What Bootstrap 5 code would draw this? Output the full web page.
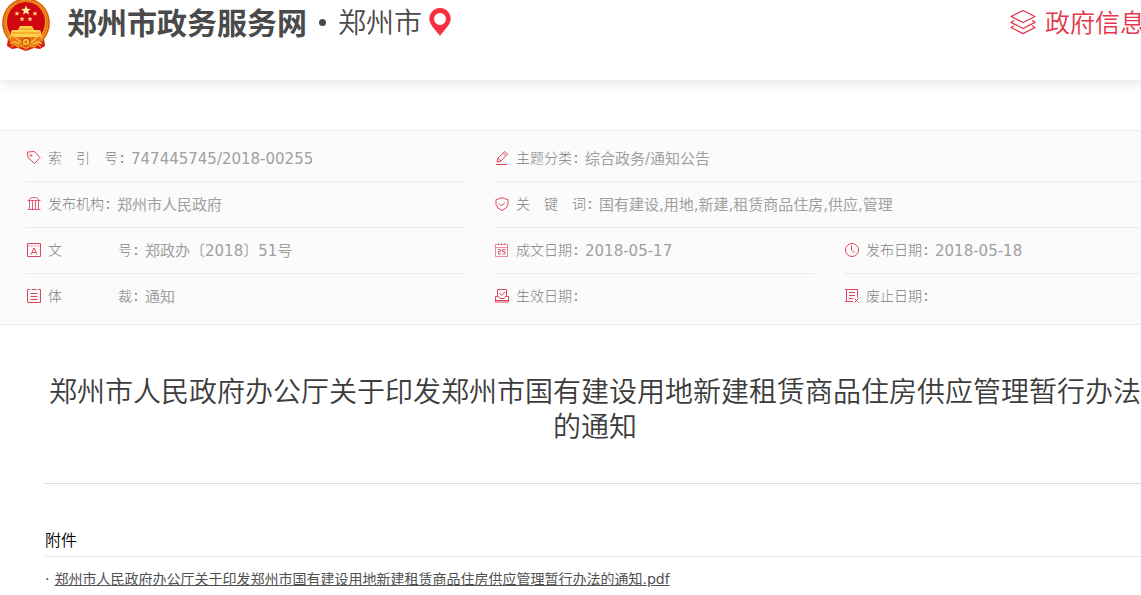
<!DOCTYPE html>
<html lang="zh-CN">
<head>
<meta charset="utf-8">
<meta name="viewport" content="width=device-width, initial-scale=1">
<title>郑州市政务服务网</title>
<link href="https://cdn.jsdelivr.net/npm/bootstrap@5.3.0/dist/css/bootstrap.min.css" rel="stylesheet">
<style>
  html { overflow: hidden; }
  body { font-family: "DejaVu Sans", "Noto Sans CJK SC", sans-serif; font-size: 14px; color: #444; background: #fff; overflow: hidden; }
  .page-wrap { min-width: 1190px; }
  .site-header { font-family: "Noto Sans CJK SC", sans-serif; height: 80px; padding: 0 45px 34px 0; box-shadow: 0 2px 12px rgba(0,0,0,.12); color: #4a4a4a; }
  .emblem { width: 52px; height: 52px; }
  .site-name, .city, .open-info { line-height: 43px; }
  .site-name { font-size: 30px; font-weight: 700; margin-left: 15px; color: inherit; }
  .dot { width: 7px; height: 7px; background: #4a4a4a; margin: 19px 12px 0; }
  .city { font-size: 28px; font-weight: 350; }
  .pin { width: 22px; height: 28px; margin: 8px 0 0 7px; }
  .open-info { font-size: 25px; font-weight: 350; color: #e6364a; gap: 9px; }
  .meta-box { margin-top: 50px; padding: 5px 26px; background: #fbfbfb; border: 1px solid #ebebeb; border-width: 1px 0; }
  .meta-grid { display: grid; grid-template-columns: 438fr 320fr 320fr; column-gap: 30px; margin: 0; }
  .meta-item { height: 46px; padding-bottom: 2px; border-bottom: 1px solid #ebebeb; white-space: nowrap; }
  .meta-item.last { height: 45px; border-bottom: 0; }
  .wide { grid-column: span 2; }
  .meta-item svg { width: 16px; height: 16px; margin-right: 6px; fill: none; stroke: #e0455f; stroke-width: 1; }
  .meta-item dt { font-family: "Noto Sans CJK SC", sans-serif; font-size: 14px; font-weight: 300; color: #808080; white-space: pre; }
  .meta-item dt::after { content: ":"; display: inline-block; width: 13px; padding-left: 2px; font-weight: 400; }
  .meta-item dd { font-size: 15px; color: #a0a0a0; margin: 0; padding-top: 3px; }
  .article { margin: 0 45px; }
  .doc-title { font-family: "Noto Sans CJK SC", sans-serif; font-size: 28px; line-height: 35px; font-weight: 350; color: #3c3c3c; padding: 48px 0 40px; margin: 0; border-bottom: 1px solid #ddd; }
  .files-title { font-family: "Noto Sans CJK SC", sans-serif; font-size: 16px; line-height: 32px; font-weight: 350; color: #000; margin: 39px 0 0; padding-bottom: 1px; border-bottom: 1px solid #e8e8e8; }
  .files { line-height: 44px; }
  .files a { color: #505050; margin-left: 5px; }
</style>
</head>
<body>
<div class="page-wrap">
  <header class="site-header d-flex align-items-start">
    <svg class="emblem" viewBox="0 2 52 52" aria-hidden="true">
      <path d="M8 40 L7 48 L12 51 L18 50 L26 53 L34 50 L40 51 L45 48 L44 40z" fill="#d91c12"/>
      <ellipse cx="26" cy="25" rx="24" ry="25" fill="#f0961c"/>
      <ellipse cx="26" cy="25" rx="23" ry="24" fill="none" stroke="#d9401a" stroke-width="1"/>
      <ellipse cx="26" cy="25" rx="21" ry="22" fill="none" stroke="#d9501a" stroke-width="1" stroke-dasharray="2 1"/>
      <ellipse cx="26" cy="24" rx="19" ry="20" fill="#d0050f"/>
      <path d="M26 7.500l1.300 3.300 3.500.2-2.700 2.200.9 3.500-3-2-3 2 .9-3.500-2.700-2.200 3.500-.2z" fill="#fff0a0"/>
      <g fill="#ffe080"><path id="s" d="M17 13l.7 1.700 1.800.1-1.400 1.200.5 1.800-1.600-1-1.600 1 .5-1.800-1.400-1.200 1.800-.1z"/><use href="#s" x="18"/><use href="#s" x="5" y="5.500"/><use href="#s" x="13" y="5.500"/></g>
      <path d="M20 28h12l2 4H18zM12 32h28l1 2v5H11v-5z" fill="#ffd04a"/>
      <path d="M12 35h28M20 31h12" stroke="#ee8b18" stroke-width="1"/>
      <path d="M11 39h30l-5 5-10 2-10-2z" fill="#e8701a"/>
      <path d="M9 40q3-4 7 0t6 4q4-5 8 0 3 0 6-4t7 0M10 46q5-4 9 0M33 46q5-4 9 0" fill="none" stroke="#f9b83a" stroke-width="1.500"/>
      <circle cx="26" cy="44" r="4" fill="#f8bf2e" stroke="#c92d12"/><circle cx="26" cy="44" r="1.500" fill="#e8701a"/>
      <path d="M11 49l4-3 3 3 4-2 4 4 4-4 4 2 3-3 4 3" fill="none" stroke="#f29a20" stroke-width="1.500"/>
    </svg>
    <a href="#" class="site-name text-decoration-none">郑州市政务服务网</a>
    <span class="dot rounded-circle"></span>
    <span class="city">郑州市</span>
    <svg class="pin" viewBox="0 0 22 28" aria-hidden="true"><path fill="#f7303f" fill-rule="evenodd" d="M11 0a10.700 10.700 0 0 1 10.700 10.700C21.700 17 15 22 11 28 7 22 .3 17 .3 10.700A10.700 10.700 0 0 1 11 0zm0 5a6 6 0 1 0 0 12 6 6 0 0 0 0-12z"/></svg>
    <a href="#" class="open-info d-flex align-items-center text-decoration-none ms-auto">
      <svg width="26" height="26" viewBox="0 0 26 26" fill="none" stroke="#e6364a" stroke-width="1.300" stroke-linejoin="round" aria-hidden="true"><path d="M13 1.500L25 7.500 13 13.500 1 7.500zM4 11.500L1 13.300 13 19.500 25 13.300 22 11.500M4 16.800L1 18.500 13 24.700 25 18.500 22 16.800"/></svg>
      <span>政府信息</span>
    </a>
  </header>

  <section class="meta-box">
    <dl class="meta-grid">
      <div class="meta-item d-flex align-items-center">
        <svg viewBox="0 0 16 16"><path d="M1.500 2l7-.5 5.500 6-5.500 6L2 7.500z"/><circle cx="5" cy="5.500" r=".8"/></svg>
        <dt>索&emsp;引&emsp;号</dt><dd>747445745/2018-00255</dd>
      </div>
      <div class="meta-item wide d-flex align-items-center">
        <svg viewBox="0 0 16 16"><path d="M3 12l1-4 7-6.500 2.500 2.500L7 11zM9.500 3l2.500 2.500M4.500 8.500L6.500 11M2 14.500h11"/></svg>
        <dt>主题分类</dt><dd>综合政务/通知公告</dd>
      </div>
      <div class="meta-item d-flex align-items-center">
        <svg viewBox="0 0 16 16"><path d="M1.500 4.500h13M2.500 4.500C4 2 6 1.500 8 1.500s4 .5 5.500 3M3.500 4.500v9M6.500 4.500v9M9.500 4.500v9M12.500 4.500v9M1.500 13.500h13" stroke-opacity=".85"/></svg>
        <dt>发布机构</dt><dd>郑州市人民政府</dd>
      </div>
      <div class="meta-item wide d-flex align-items-center">
        <svg viewBox="0 0 16 16"><path d="M8 1.500Q10.500 3 14 3.500v5Q13 12.500 8 14.500 3 12.500 2 8.500v-5Q5.500 3 8 1.500zM5 7.500L7.500 10 11 6.500"/></svg>
        <dt>关&emsp;键&emsp;词</dt><dd>国有建设,用地,新建,租赁商品住房,供应,管理</dd>
      </div>
      <div class="meta-item d-flex align-items-center">
        <svg viewBox="0 0 16 16"><path d="M1.500 1.500h13v13h-13zM5 12.500L8 6l3 6.500M6 10.500h4"/><path d="M2 4h12" stroke-dasharray="2 1" stroke-opacity=".6"/></svg>
        <dt>文&emsp;&emsp;&emsp;&emsp;号</dt><dd>郑政办〔2018〕51号</dd>
      </div>
      <div class="meta-item d-flex align-items-center">
        <svg viewBox="0 0 16 16"><path d="M1.500 2.500h12v12h-12zM1.500 5.500h12M4.500 1v2M7.500 1v2M10.500 1v2" stroke-opacity=".6"/><path d="M4 7.500h2.500v2H4.500V12H7M11.500 7.500h-3v2h2.500V12H8.500" stroke-opacity=".85"/></svg>
        <dt>成文日期</dt><dd>2018-05-17</dd>
      </div>
      <div class="meta-item d-flex align-items-center">
        <svg viewBox="0 0 16 16"><circle cx="8" cy="8" r="6.500"/><path d="M7.500 3.500V8l3 2.500"/></svg>
        <dt>发布日期</dt><dd>2018-05-18</dd>
      </div>
      <div class="meta-item last d-flex align-items-center">
        <svg viewBox="0 0 16 16"><path d="M4 1.500H1.500v13h13v-13H12M5.500 1.500h5M4.500 5.500h7M4.500 8.500h7M4.500 11.500h7"/></svg>
        <dt>体&emsp;&emsp;&emsp;&emsp;裁</dt><dd>通知</dd>
      </div>
      <div class="meta-item last d-flex align-items-center">
        <svg viewBox="0 0 16 16"><path d="M3.500 8.500v-7h9v7M5.500 5L7.500 7.500 11 4M1.500 8.500h3l1.500 2h4l1.500-2h3v5.500h-13zM1.500 12.500h13"/></svg>
        <dt>生效日期</dt><dd></dd>
      </div>
      <div class="meta-item last d-flex align-items-center">
        <svg viewBox="0 0 16 16"><path d="M1 1.500h13M2.500 1.500v12M13.500 1.500v8M5 4.500h6M5 7.500h6M5 10.500h4M1 13.500h8M10.500 10.500l4 4M14.500 10.500l-4 4"/></svg>
        <dt>废止日期</dt><dd></dd>
      </div>
    </dl>
  </section>

  <main class="article">
    <h1 class="doc-title text-center">郑州市人民政府办公厅关于印发郑州市国有建设用地新建租赁商品住房供应管理暂行办法的通知</h1>
    <h2 class="files-title">附件</h2>
    <ul class="files list-unstyled mb-0">
      <li>·<a href="#">郑州市人民政府办公厅关于印发郑州市国有建设用地新建租赁商品住房供应管理暂行办法的通知.pdf</a></li>
    </ul>
  </main>
</div>
<script src="https://cdn.jsdelivr.net/npm/bootstrap@5.3.0/dist/js/bootstrap.bundle.min.js"></script>
</body>
</html>
